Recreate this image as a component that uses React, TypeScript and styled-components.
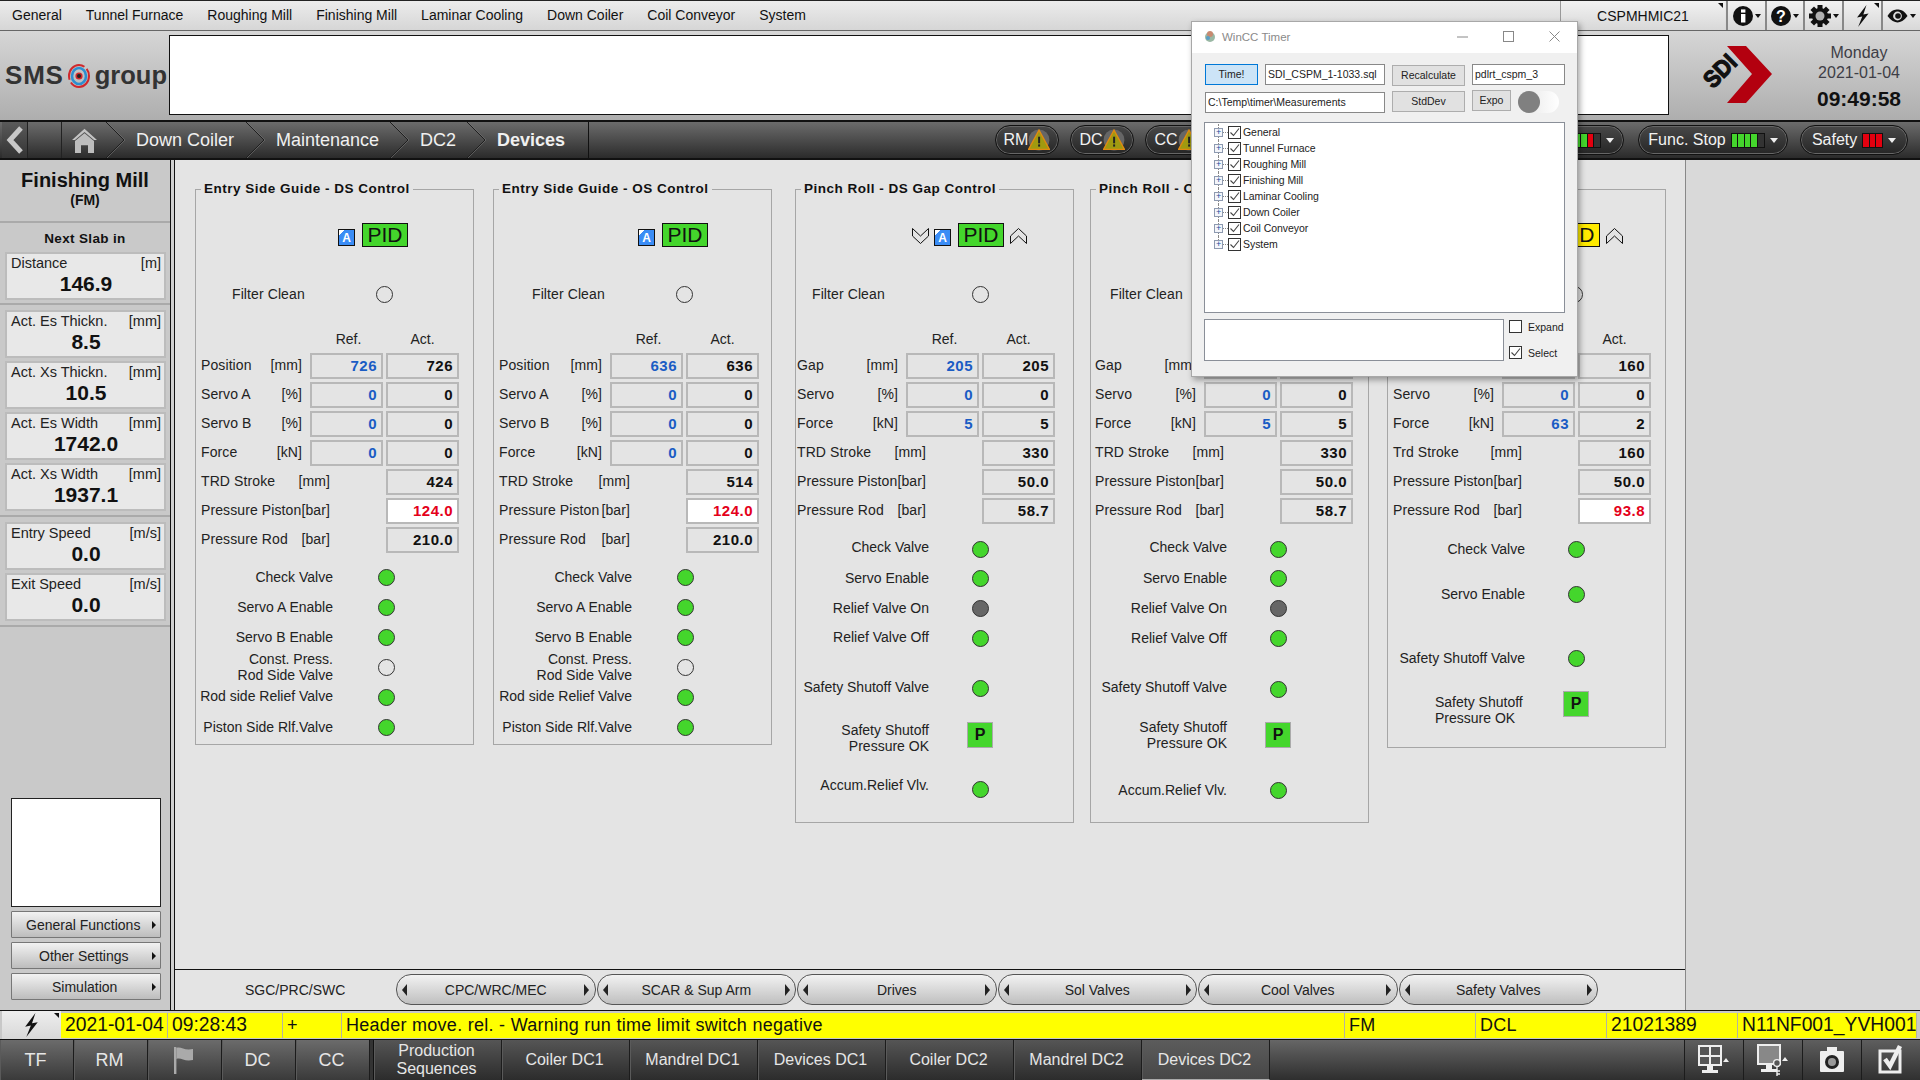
import React from 'react';
import styled, { createGlobalStyle } from 'styled-components';

const Global = createGlobalStyle`
  html, body { margin: 0; padding: 0; background: #e4e4e4; overflow: hidden; }
  * { box-sizing: border-box; }
  body { font-family: "Liberation Sans", Arial, sans-serif; color: #111; }
`;

const Root = styled.div`
  position: relative; width: 1920px; height: 1080px; overflow: hidden;
  display: flex; flex-direction: column;
`;

/* ---------- top menu ---------- */
const TopMenu = styled.div`
  height: 31px; flex: none; display: flex; align-items: stretch;
  border-top: 1px solid #222; border-bottom: 1px solid #666;
  background: linear-gradient(#ececec, #d6d6d6);
`;
const MenuList = styled.div`
  display: flex; align-items: center; gap: 24px; padding: 0 0 2px 12px; font-size: 14px; flex: 1;
`;
const HostCell = styled.div`
  position: relative; width: 165px; margin-right: 1px; display: flex; align-items: center; justify-content: center;
  font-size: 14px; background: linear-gradient(#f2f2f2, #d8d8d8);
  border-left: 1px solid #999;
`;
const CornerMark = styled.i`
  position: absolute; top: 2px; right: 2px; width: 0; height: 0;
  border-top: 5px solid #111; border-left: 5px solid transparent;
`;
const IconCell = styled.div<{ $w: number }>`
  position: relative; width: ${p => p.$w}px; display: flex; align-items: center; justify-content: center; gap: 2px;
  background: linear-gradient(#f2f2f2, #d8d8d8); border-left: 2px solid #888;
`;
const Caret = styled.i`
  width: 0; height: 0; border-top: 4px solid #111; border-left: 3px solid transparent; border-right: 3px solid transparent;
`;

/* ---------- header ---------- */
const Header = styled.div`
  height: 89px; flex: none; display: flex; align-items: flex-start;
  background: linear-gradient(#d6d6d6, #aeaeae);
`;
const LogoArea = styled.div`
  width: 169px; height: 89px; flex: none; padding-left: 5px; display: flex; align-items: center; gap: 5px;
  font-size: 25.5px; font-weight: 700; color: #333;
`;
const LogoSms = styled.span`
  font-size: 26px; letter-spacing: 0.8px; margin-right: -1px;
`;
const WhiteBox = styled.div`
  width: 1500px; height: 80px; margin-top: 4px; background: #fff; border: 1px solid #111; flex: none;
`;
const SdiMark = styled.svg`
  margin: 13px 0 0 30px; flex: none; overflow: visible;
`;
const DateBlock = styled.div`
  width: 110px; margin: 12px 0 0 29px; display: flex; flex-direction: column; align-items: center;
  font-size: 16px; color: #3e3e46; line-height: 20px;
`;
const TimeText = styled.div`
  margin-top: 4px; font-size: 21px; line-height: 24px; font-weight: 700; color: #111;
`;

/* ---------- breadcrumb bar ---------- */
const NavBar = styled.div`
  height: 40px; flex: none; display: flex; align-items: stretch;
  border-top: 2px solid #111; border-bottom: 2px solid #111;
  background: linear-gradient(#6c6c6c, #2b2b2b); color: #f0f0f0; font-size: 18px;
`;
const BackButton = styled.div`
  width: 26px; margin-left: 2px; display: flex; align-items: center; justify-content: center;
  background: linear-gradient(#5a5a5a, #333); border-right: 1px solid #222;
`;
const HomeCell = styled.div`
  margin-left: 33px; width: 45px; padding-left: 10px; display: flex; align-items: center;
  border-left: 1px solid #222;
`;
const CrumbSep = styled.svg`
  width: 20px; height: 36px; flex: none;
`;
const Crumb = styled.div<{ $w: number; $bold?: boolean }>`
  width: ${p => p.$w}px; display: flex; align-items: center; padding-left: 10px;
  font-weight: ${p => (p.$bold ? 700 : 400)};
`;
const NavEnd = styled.div`
  width: 20px; border-right: 1px solid #111;
`;
const PillGroup = styled.div<{ $ml: string }>`
  margin-left: ${p => p.$ml}; display: flex; align-items: center; gap: 11px;
`;
const Pill = styled.div<{ $w: number; $gap?: number; $ml?: number; $mr?: number; $end?: boolean }>`
  width: ${p => p.$w}px; height: 30px; border-radius: 15px; border: 1px solid #111;
  margin: 0 ${p => p.$mr ?? 0}px 0 ${p => p.$ml ?? 0}px;
  box-shadow: 0 0 0 1px #666 inset;
  background: linear-gradient(#484848, #262626);
  display: flex; align-items: center; justify-content: ${p => (p.$end ? 'flex-end' : 'center')}; gap: ${p => p.$gap ?? 5}px;
  padding-right: ${p => (p.$end ? 9 : 0)}px; font-size: 16px; color: #f2f2f2;
`;
const Led = styled.div`
  display: flex; gap: 1px; padding: 1px; background: #111; height: 15px;
`;
const LedSeg = styled.i<{ $c: string }>`
  width: 5.6px; height: 13px; background: ${p => p.$c};
`;
const WhiteCaret = styled.i`
  width: 0; height: 0; border-top: 5px solid #eee; border-left: 4px solid transparent; border-right: 4px solid transparent;
`;

/* ---------- main ---------- */
const Main = styled.div`
  height: 850px; flex: none; display: flex;
`;
const Sidebar = styled.div`
  width: 170px; flex: none; background: #c9c9c9; display: flex; flex-direction: column;
`;
const Rail = styled.div`
  width: 5px; flex: none; background: #d0d0d0; border-left: 1px solid #111; border-right: 1px solid #111;
`;
const Center = styled.div`
  width: 1510px; flex: none; display: flex; flex-direction: column; background: #e4e4e4;
`;
const RightCol = styled.div`
  flex: 1; background: #d9d9d9; border-left: 1px solid #888;
`;
const TitleBlock = styled.div`
  height: 63px; border-bottom: 2px solid #aaa; display: flex; flex-direction: column; align-items: center;
  padding-top: 9px; font-weight: 700; font-size: 20px; line-height: 22px;
`;
const TitleSub = styled.div`
  font-size: 14px; line-height: 18px;
`;
const NextSlab = styled.div`
  height: 29px; padding-top: 1px; display: flex; align-items: center; justify-content: center; font-weight: 700; font-size: 13.5px;
  letter-spacing: 0.35px;
`;
const Section = styled.div<{ $pt: number; $pb: number }>`
  padding: ${p => p.$pt}px 4px ${p => p.$pb}px 5px; border-bottom: 2px solid #aaa;
  display: flex; flex-direction: column; gap: 3px;
`;
const Card = styled.div`
  height: 48px; border: 2px solid #bcbcbc; background: #e8e8e8; padding: 0 3px 0 4px;
  display: flex; flex-direction: column;
`;
const CardTop = styled.div`
  display: flex; justify-content: space-between; font-size: 14.5px; line-height: 18px; color: #222;
`;
const CardValue = styled.div`
  text-align: center; font-size: 21px; font-weight: 700; line-height: 24px;
`;
const SideSpacer = styled.div`
  flex: 1;
`;
const SideWhite = styled.div`
  width: 150px; height: 109px; margin-left: 11px; background: #fff; border: 1px solid #222;
`;
const SideButton = styled.div<{ $pl: number }>`
  position: relative; width: 150px; height: 27px; margin: 4px 0 0 11px; padding-left: ${p => p.$pl}px;
  display: flex; align-items: center; font-size: 14px; color: #222;
  background: linear-gradient(#f2f2f2, #bdbdbd); border: 1px solid #777; border-radius: 1px;
  &::after {
    content: ""; position: absolute; right: 4px; top: 9px;
    border-left: 4px solid #111; border-top: 4px solid transparent; border-bottom: 4px solid transparent;
  }
`;
const SideBottomPad = styled.div`
  height: 10px; flex: none;
`;

/* ---------- panels ---------- */
const PanelArea = styled.div`
  height: 809px; flex: none; display: flex; align-items: flex-start; padding: 29px 0 0 20px;
`;
const Panel = styled.section<{ $ml: number; $h: number }>`
  position: relative; width: 279px; height: ${p => p.$h}px; margin-left: ${p => p.$ml}px; flex: none;
  border: 1px solid #a6a6a6;
`;
const Legend = styled.h3`
  position: absolute; top: -10px; left: 5px; margin: 0; padding: 0 3px; background: #e4e4e4;
  font-size: 13.5px; line-height: 17px; font-weight: 700; letter-spacing: 0.5px; white-space: nowrap;
`;
const ModeRow = styled.div<{ $pl: number }>`
  margin-top: 33px; height: 24px; padding-left: ${p => p.$pl}px; display: flex; align-items: center;
`;
const AutoIcon = styled.div`
  width: 17px; height: 17px; margin: 4px 7px 0 0; flex: none; border: 1px solid #111; color: #fff;
  background: linear-gradient(135deg, #fff 0 4px, #3a8cf5 4px);
  font-size: 12px; font-weight: 700; line-height: 16px; text-align: center;
`;
const PidBox = styled.div<{ $c: string }>`
  width: 46px; height: 24px; flex: none; background: ${p => p.$c}; border: 1px solid #111;
  font-size: 21px; line-height: 22px; text-align: center; color: #111;
`;
const ChevronSvg = styled.svg<{ $ml: number; $mr: number }>`
  width: 17px; height: 16px; flex: none; margin: 2px ${p => p.$mr}px 0 ${p => p.$ml}px;
`;
const FilterRow = styled.div<{ $pl: number; $dot: number }>`
  margin-top: 38px; height: 18px; display: grid; grid-template-columns: ${p => p.$dot}px 18px; align-items: center;
  padding-left: 0; font-size: 14px; letter-spacing: 0.1px; color: #222;
  & > span { padding-left: ${p => p.$pl}px; }
`;
const HeadRow = styled.div<{ $col: number }>`
  margin-top: 28px; height: 16px; display: grid; grid-template-columns: ${p => p.$col}px 73px 73px; column-gap: 3px;
  font-size: 14px; line-height: 16px; text-align: center; color: #222;
`;
const RefHead = styled.span`
  padding-left: 4px;
`;
const DataGrid = styled.div`
  margin-top: 6px; display: flex; flex-direction: column; gap: 3px;
`;
const DataRow = styled.div<{ $col: number }>`
  height: 26px; display: grid; grid-template-columns: ${p => p.$col}px 73px 73px; column-gap: 3px; align-items: center;
`;
const RowLabel = styled.div<{ $pl: number; $wide?: boolean }>`
  grid-column: ${p => (p.$wide ? '1 / span 2' : '1')};
  display: flex; justify-content: space-between; padding: 0 ${p => (p.$wide ? 53 : 5)}px 2px ${p => p.$pl}px;
  font-size: 14px; letter-spacing: 0.1px; color: #222; white-space: nowrap;
`;
const ValueBox = styled.div<{ $col: number; $tone?: 'blue' | 'alert' }>`
  grid-column: ${p => p.$col}; height: 26px; border: 2px solid #b8b8b8; padding-right: 4px; text-align: right;
  font-size: 15px; font-weight: 700; line-height: 22px; letter-spacing: 0.5px;
  background: ${p => (p.$tone === 'alert' ? '#fff' : 'transparent')};
  color: ${p => (p.$tone === 'blue' ? '#1a5cc4' : p.$tone === 'alert' ? '#e4001a' : '#111')};
`;
const StatusRow = styled.div<{ $gap: number; $label: number; $ml: number }>`
  height: 26px; margin-top: ${p => p.$gap}px; display: grid; align-items: center;
  grid-template-rows: 26px;
  grid-template-columns: ${p => p.$label}px 26px; column-gap: ${p => p.$ml}px;
`;
const StatusLabel = styled.div<{ $up?: number; $left?: number }>`
  text-align: ${p => (p.$left ? 'left' : 'right')}; padding-left: ${p => p.$left ?? 0}px;
  font-size: 14px; line-height: 16px; color: #222; white-space: pre-line;
  padding-bottom: ${p => Math.max(p.$up ?? 0, 0) * 2}px;
  padding-top: ${p => Math.max(-(p.$up ?? 0), 0) * 2}px;
`;
const Indicator = styled.div`
  display: flex; justify-content: center; align-items: center;
`;
const Dot = styled.i<{ $c: string }>`
  display: block; width: 17px; height: 17px; border-radius: 50%; border: 1px solid #333; background: ${p => p.$c};
`;
const PBox = styled.div`
  width: 26px; height: 26px; flex: none; background: #44d62c; border: 1px solid #aaa;
  font-size: 16px; font-weight: 700; line-height: 24px; text-align: center; color: #111;
`;

/* ---------- tab strip ---------- */
const TabStrip = styled.div`
  height: 41px; flex: none; display: flex; align-items: flex-start; padding-top: 4px; gap: 1px; border-top: 1px solid #111;
`;
const PlainTab = styled.div`
  width: 220px; height: 31px; padding-left: 70px; display: flex; align-items: center; font-size: 14px; color: #222;
`;
const RoundTab = styled.div`
  width: 199.5px; height: 31px; border-radius: 15px; border: 1px solid #555; padding: 0 5px;
  background: linear-gradient(#f2f2f2, #bfbfbf); display: flex; align-items: center; justify-content: space-between;
  font-size: 14px; color: #222;
`;
const ArrowLeft = styled.i`
  border-right: 5px solid #222; border-top: 6px solid transparent; border-bottom: 6px solid transparent;
`;
const ArrowRight = styled.i`
  border-left: 5px solid #222; border-top: 6px solid transparent; border-bottom: 6px solid transparent;
`;

/* ---------- alarm ---------- */
const AlarmBar = styled.div`
  height: 30px; flex: none; display: flex; padding-left: 2px; background: #c8c8c8;
  border-top: 1px solid #111; border-bottom: 1px solid #111;
`;
const BoltButton = styled.div`
  position: relative; width: 59px; display: flex; align-items: center; justify-content: center;
  background: linear-gradient(#eee, #d8d8d8);
`;
const AlarmGrid = styled.div`
  margin: 2px 0; height: 25px; display: grid; width: 1856px; background: #ffff00; line-height: 24px;
  grid-template-columns: 107px 115px 59px 1003px 131px 131px 131px 179px;
`;
const AlarmCell = styled.div<{ $num?: boolean }>`
  padding-left: 4px; border-right: 1px solid #b4b4a0; overflow: hidden; white-space: nowrap; color: #111;
  font-size: ${p => (p.$num ? 19.3 : 18)}px; letter-spacing: ${p => (p.$num ? 0 : 0.28)}px;
`;

/* ---------- bottom ---------- */
const BottomBar = styled.div`
  height: 40px; flex: none; display: flex; background: linear-gradient(#666, #2e2e2e); color: #e6e6e6;
`;
const Tab = styled.div<{ $w: number; $active?: boolean; $big?: boolean }>`
  width: ${p => p.$w}px; height: 40px; padding-right: 2px; display: flex; align-items: center; justify-content: center; text-align: center;
  font-size: ${p => (p.$big ? 18 : 16)}px; line-height: 18px; border-right: 1px solid #1c1c1c;
  box-shadow: inset 1px 0 0 #5a5a5a;
  background: ${p => (p.$active ? 'linear-gradient(#5c5c5c, #474747)' : p.$big ? 'linear-gradient(#6b6b6b, #3a3a3a)' : 'linear-gradient(#555, #2c2c2c)')};
  border-bottom: ${p => (p.$active ? '1px solid #aaa' : 'none')};
`;
const TabGap = styled.div`
  width: 4px; background: #333; border-right: 1px solid #111;
`;
const ToolGroup = styled.div`
  margin-left: auto; display: flex;
`;
const ToolCell = styled.div`
  width: 59px; height: 40px; display: flex; align-items: center; justify-content: center;
  border-left: 1px solid #1c1c1c; background: linear-gradient(#5e5e5e, #303030);
`;

/* ---------- floating window ---------- */
const Win = styled.div`
  position: absolute; left: 1191px; top: 21px; width: 387px; height: 356px;
  background: #f0f0f0; border: 1px solid #a8a8a8; box-shadow: 2px 3px 6px rgba(0,0,0,.35);
  display: flex; flex-direction: column; font-size: 11px; color: #222;
`;
const WinTitle = styled.div`
  height: 31px; flex: none; background: #fff; display: flex; align-items: center; padding: 0 0 2px 12px; gap: 6px;
  color: #8a8a8a; font-size: 11.5px;
`;
const WinControls = styled.div`
  margin-left: auto; display: flex; align-items: center; gap: 35px; padding-right: 17px; color: #999;
`;
const WinBody = styled.div`
  padding: 11px 0 0 13px;
`;
const WinRow = styled.div<{ $mt?: number }>`
  display: flex; align-items: flex-start; gap: 7px; height: 22px; margin-top: ${p => p.$mt ?? 0}px;
`;
const WinInput = styled.div<{ $w: number; $mt?: number }>`
  width: ${p => p.$w}px; height: 21px; flex: none; margin-top: ${p => p.$mt ?? 0}px; background: #fff; border: 1px solid #888; padding-left: 2px;
  font-size: 10.5px; line-height: 18px; white-space: nowrap; overflow: hidden;
`;
const WinBtn = styled.div<{ $w: number; $mt?: number; $primary?: boolean }>`
  width: ${p => p.$w}px; height: 21px; flex: none; margin-top: ${p => p.$mt ?? 0}px; text-align: center;
  font-size: 10.5px; line-height: 19px;
  background: ${p => (p.$primary ? '#cce4f7' : '#e1e1e1')}; border: 1px solid ${p => (p.$primary ? '#0078d7' : '#adadad')};
`;
const Toggle = styled.div`
  width: 41px; height: 22px; border-radius: 11px; background: linear-gradient(90deg, #e4e4e4, #fff); margin-top: 1px;
  &::before { content: ""; display: block; width: 22px; height: 22px; border-radius: 50%; background: #808080; }
`;
const Tree = styled.div`
  width: 361px; height: 191px; margin: 10px 0 0 -1px; padding-top: 1px; background: #fff; border: 1px solid #8a8f98;
`;
const TreeRow = styled.div`
  position: relative; height: 16px; display: flex; align-items: center; padding-left: 9px; font-size: 10.5px; letter-spacing: -0.05px;
  &::before { content: ""; position: absolute; left: 13px; top: 0; bottom: 0; border-left: 1px dotted #888; }
  &:last-child::before { bottom: 8px; }
`;
const PlusBox = styled.i`
  position: relative; z-index: 1; width: 9px; height: 9px; flex: none; background: #f4f6fa; border: 1px solid #8e9ab0;
  font-style: normal; color: #234a9c; font-size: 9px; line-height: 7px; text-align: center;
`;
const TreeDots = styled.i`
  width: 5px; border-top: 1px dotted #888; flex: none;
`;
const Box13 = styled.span`
  width: 13px; height: 13px; flex: none; background: #fff; border: 1px solid #333; display: flex;
`;
const TreeLabel = styled.span`
  margin-left: 2px;
`;
const WinBottom = styled.div`
  margin: 6px 0 0 -1px; display: flex;
`;
const WinText = styled.div`
  width: 300px; height: 42px; background: #fff; border: 1px solid #8a8f98;
`;
const WinChecks = styled.div`
  margin-left: 5px; display: flex; flex-direction: column; gap: 13px; padding-top: 1px;
`;
const WinCheck = styled.label`
  display: flex; align-items: center; gap: 6px; height: 13px; font-size: 10.5px;
`;

/* ---------- drawings ---------- */
const Tick = () => (
  <svg width="11" height="11" viewBox="0 0 11 11"><path d="M1.5 5.5 L4.5 8.5 L10 1.5" fill="none" stroke="#444" strokeWidth="1.1" /></svg>
);
const ChevUp = ({ ml, mr }: { ml: number; mr: number }) => (
  <ChevronSvg viewBox="0 0 17 16" $ml={ml} $mr={mr}><polygon points="8.5,0.5 16.5,8 16.5,15.5 8.5,8 0.5,15.5 0.5,8" fill="none" stroke="#111" /></ChevronSvg>
);
const ChevDown = ({ ml, mr }: { ml: number; mr: number }) => (
  <ChevronSvg viewBox="0 0 17 16" $ml={ml} $mr={mr}><polygon points="8.5,15.5 16.5,8 16.5,0.5 8.5,8 0.5,0.5 0.5,8" fill="none" stroke="#111" /></ChevronSvg>
);
const Sep = () => (
  <CrumbSep viewBox="0 0 20 36"><polyline points="0,0 18,18 0,36" fill="none" stroke="#1e1e1e" strokeWidth="1" /><polyline points="1,0 19,18 1,36" fill="none" stroke="#777" strokeWidth="0.6" /></CrumbSep>
);
const Warn = () => (
  <svg width="22" height="22" viewBox="0 0 20 20">
    <circle cx="10" cy="10" r="9.5" fill="#666" />
    <polygon points="10,1 19.5,18.5 0.5,18.5" fill="#a09a10" stroke="#e08a10" strokeWidth="1.2" />
    <rect x="9.2" y="7" width="1.8" height="6" fill="#222" /><rect x="9.2" y="14" width="1.8" height="2" fill="#222" />
  </svg>
);
const Bolt = ({ size }: { size: number }) => (
  <svg width={size * 0.62} height={size} viewBox="0 0 13 21"><polygon points="10,0 1,12 6,11 2,21 12,8 7,9" fill="#111" /></svg>
);
const Swirl = () => (
  <svg width="22" height="24" viewBox="0 0 22 24">
    <ellipse cx="11" cy="12" rx="10" ry="11" fill="none" stroke="#d0282c" strokeWidth="2" strokeDasharray="26 3" />
    <ellipse cx="11" cy="12" rx="7" ry="8" fill="none" stroke="#2d8fd0" strokeWidth="2.6" />
    <circle cx="11" cy="12" r="3.6" fill="#d0282c" /><circle cx="11" cy="12" r="2" fill="#222" />
  </svg>
);
const Gear = () => (
  <svg width="22" height="22" viewBox="0 0 22 22">
    {[0, 45, 90, 135].map(a => <rect key={a} x="8.5" y="0" width="5" height="22" fill="#111" transform={`rotate(${a} 11 11)`} />)}
    <circle cx="11" cy="11" r="8" fill="#111" /><circle cx="11" cy="11" r="4.5" fill="#b0b0b0" />
  </svg>
);

/* ---------- data ---------- */
type DataItem = { name: string; unit: string; ref?: string; act: string; alert?: boolean };
type StatusItem = { label: string; gap: number; kind: 'on' | 'off' | 'idle' | 'p'; up?: number; left?: number };
type PanelCfg = {
  title: string; ml: number; h: number; labelPl: number; col: number; pidPl: number; arrows: boolean; pid: string;
  filterPl: number; filterDot: number; statusW: number; statusMl: number; rows: DataItem[]; status: StatusItem[];
};

const guideStatus = (): StatusItem[] => [
  { label: 'Check Valve', gap: 11, kind: 'on' },
  { label: 'Servo A Enable', gap: 4, kind: 'on' },
  { label: 'Servo B Enable', gap: 4, kind: 'on' },
  { label: 'Const. Press.\nRod Side Valve', gap: 4, kind: 'off' },
  { label: 'Rod side Relief Valve', gap: 4, kind: 'on', up: 1 },
  { label: 'Piston Side Rlf.Valve', gap: 4, kind: 'on' },
];
const guideRows = (pos: string, trd: string): DataItem[] => [
  { name: 'Position', unit: '[mm]', ref: pos, act: pos },
  { name: 'Servo A', unit: '[%]', ref: '0', act: '0' },
  { name: 'Servo B', unit: '[%]', ref: '0', act: '0' },
  { name: 'Force', unit: '[kN]', ref: '0', act: '0' },
  { name: 'TRD Stroke', unit: '[mm]', act: trd },
  { name: 'Pressure Piston', unit: '[bar]', act: '124.0', alert: true },
  { name: 'Pressure Rod', unit: '[bar]', act: '210.0' },
];
const pinchRows: DataItem[] = [
  { name: 'Gap', unit: '[mm]', ref: '205', act: '205' },
  { name: 'Servo', unit: '[%]', ref: '0', act: '0' },
  { name: 'Force', unit: '[kN]', ref: '5', act: '5' },
  { name: 'TRD Stroke', unit: '[mm]', act: '330' },
  { name: 'Pressure Piston', unit: '[bar]', act: '50.0' },
  { name: 'Pressure Rod', unit: '[bar]', act: '58.7' },
];

const panels: PanelCfg[] = [
  { title: 'Entry Side Guide - DS Control', ml: 0, h: 556, labelPl: 5, col: 111, pidPl: 142, arrows: false, pid: '#44d62c', filterPl: 36, filterDot: 180, statusW: 137, statusMl: 40, rows: guideRows('726', '424'), status: guideStatus() },
  { title: 'Entry Side Guide - OS Control', ml: 19, h: 556, labelPl: 5, col: 113, pidPl: 144, arrows: false, pid: '#44d62c', filterPl: 38, filterDot: 182, statusW: 138, statusMl: 40, rows: guideRows('636', '514'), status: guideStatus() },
  { title: 'Pinch Roll - DS Gap Control', ml: 23, h: 634, labelPl: 1, col: 107, pidPl: 116, arrows: true, pid: '#44d62c', filterPl: 16, filterDot: 176, statusW: 133, statusMl: 38, rows: pinchRows,
    status: [
      { label: 'Check Valve', gap: 12, kind: 'on', up: 2 },
      { label: 'Servo Enable', gap: 3, kind: 'on' },
      { label: 'Relief Valve On', gap: 4, kind: 'idle' },
      { label: 'Relief Valve Off', gap: 4, kind: 'on', up: 1 },
      { label: 'Safety Shutoff Valve', gap: 24, kind: 'on', up: 1 },
      { label: 'Safety Shutoff\nPressure OK', gap: 21, kind: 'p', up: -3 },
      { label: 'Accum.Relief Vlv.', gap: 28, kind: 'on', up: 4 },
    ] },
  { title: 'Pinch Roll - OS Gap Control', ml: 16, h: 634, labelPl: 4, col: 110, pidPl: 120, arrows: true, pid: '#44d62c', filterPl: 19, filterDot: 179, statusW: 136, statusMl: 38, rows: pinchRows,
    status: [
      { label: 'Check Valve', gap: 12, kind: 'on', up: 2 },
      { label: 'Servo Enable', gap: 3, kind: 'on' },
      { label: 'Relief Valve On', gap: 4, kind: 'idle' },
      { label: 'Relief Valve Off', gap: 4, kind: 'on' },
      { label: 'Safety Shutoff Valve', gap: 25, kind: 'on', up: 2 },
      { label: 'Safety Shutoff\nPressure OK', gap: 20, kind: 'p' },
      { label: 'Accum.Relief Vlv.', gap: 29, kind: 'on' },
    ] },
  { title: 'Pinch Roll - Gap Control', ml: 18, h: 559, labelPl: 5, col: 111, pidPl: 120, arrows: true, pid: '#ffea00', filterPl: 19, filterDot: 178, statusW: 137, statusMl: 38,
    rows: [
      { name: 'Gap', unit: '[mm]', ref: '160', act: '160' },
      { name: 'Servo', unit: '[%]', ref: '0', act: '0' },
      { name: 'Force', unit: '[kN]', ref: '63', act: '2' },
      { name: 'Trd Stroke', unit: '[mm]', act: '160' },
      { name: 'Pressure Piston', unit: '[bar]', act: '50.0' },
      { name: 'Pressure Rod', unit: '[bar]', act: '93.8', alert: true },
    ],
    status: [
      { label: 'Check Valve', gap: 12, kind: 'on' },
      { label: 'Servo Enable', gap: 19, kind: 'on' },
      { label: 'Safety Shutoff Valve', gap: 38, kind: 'on' },
      { label: 'Safety Shutoff\nPressure OK', gap: 20, kind: 'p', up: -6, left: 47 },
    ] },
];

const sideCards1 = [
  ['Act. Es Thickn.', '[mm]', '8.5'],
  ['Act. Xs Thickn.', '[mm]', '10.5'],
  ['Act. Es Width', '[mm]', '1742.0'],
  ['Act. Xs Width', '[mm]', '1937.1'],
];
const sideCards2 = [
  ['Entry Speed', '[m/s]', '0.0'],
  ['Exit Speed', '[m/s]', '0.0'],
];
const treeItems = ['General', 'Tunnel Furnace', 'Roughing Mill', 'Finishing Mill', 'Laminar Cooling', 'Down Coiler', 'Coil Conveyor', 'System'];
const menuItems = ['General', 'Tunnel Furnace', 'Roughing Mill', 'Finishing Mill', 'Laminar Cooling', 'Down Coiler', 'Coil Conveyor', 'System'];
const roundTabs = ['CPC/WRC/MEC', 'SCAR & Sup Arm', 'Drives', 'Sol Valves', 'Cool Valves', 'Safety Valves'];
const alarmCells: [string, boolean][] = [
  ['2021-01-04', true], ['09:28:43', true], ['+', false],
  ['Header move. rel. - Warning run time limit switch negative', false],
  ['FM', false], ['DCL', false], ['21021389', true], ['N11NF001_YVH001', true],
];

const SideCard = ({ c }: { c: string[] }) => (
  <Card>
    <CardTop><span>{c[0]}</span><span>{c[1]}</span></CardTop>
    <CardValue>{c[2]}</CardValue>
  </Card>
);

const PanelView = ({ p }: { p: PanelCfg }) => {
  const dotColor = (k: string) => (k === 'on' ? '#44d62c' : k === 'idle' ? '#666' : 'transparent');
  return (
    <Panel $ml={p.ml} $h={p.h}>
      <Legend>{p.title}</Legend>
      <ModeRow $pl={p.pidPl}>
        {p.arrows && <ChevDown ml={0} mr={5} />}
        <AutoIcon>A</AutoIcon>
        <PidBox $c={p.pid}>PID</PidBox>
        {p.arrows && <ChevUp ml={6} mr={0} />}
      </ModeRow>
      <FilterRow $pl={p.filterPl} $dot={p.filterDot}>
        <span>Filter Clean</span>
        <Dot $c="transparent" />
      </FilterRow>
      <HeadRow $col={p.col}><span /><RefHead>Ref.</RefHead><span>Act.</span></HeadRow>
      <DataGrid>
        {p.rows.map(r => (
          <DataRow key={r.name} $col={p.col}>
            <RowLabel $pl={p.labelPl} $wide={!r.ref}><span>{r.name}</span><span>{r.unit}</span></RowLabel>
            {r.ref && <ValueBox $col={2} $tone="blue">{r.ref}</ValueBox>}
            <ValueBox $col={3} $tone={r.alert ? 'alert' : undefined}>{r.act}</ValueBox>
          </DataRow>
        ))}
      </DataGrid>
      {p.status.map(s => (
        <StatusRow key={s.label} $gap={s.gap} $label={p.statusW} $ml={p.statusMl}>
          <StatusLabel $up={s.up} $left={s.left}>{s.label}</StatusLabel>
          <Indicator>{s.kind === 'p' ? <PBox>P</PBox> : <Dot $c={dotColor(s.kind)} />}</Indicator>
        </StatusRow>
      ))}
    </Panel>
  );
};

export default function App() {
  return (
    <Root>
      <Global />
      <TopMenu>
        <MenuList>{menuItems.map(m => <span key={m}>{m}</span>)}</MenuList>
        <HostCell>CSPMHMIC21<CornerMark /></HostCell>
        <IconCell $w={39}>
          <svg width="20" height="20" viewBox="0 0 20 20"><circle cx="10" cy="10" r="10" fill="#111" /><rect x="8" y="8" width="4.4" height="8.5" fill="#fff" /><rect x="8" y="3.4" width="4.4" height="3.2" fill="#fff" /></svg>
          <Caret />
        </IconCell>
        <IconCell $w={38}>
          <svg width="20" height="20" viewBox="0 0 20 20"><circle cx="10" cy="10" r="10" fill="#111" /><text x="10" y="16" textAnchor="middle" fontSize="16" fontWeight="700" fill="#fff" fontFamily="Liberation Sans">?</text></svg>
          <Caret />
        </IconCell>
        <IconCell $w={39}><Gear /><Caret /></IconCell>
        <IconCell $w={39}><Bolt size={22} /><CornerMark /></IconCell>
        <IconCell $w={39}>
          <svg width="21" height="14" viewBox="0 0 21 14"><path d="M0.5 7 C4 1 8 0.5 10.5 0.5 C13 0.5 17 1 20.5 7 C17 11.5 13.5 13.5 10.5 13.5 C7.5 13.5 4 11.5 0.5 7Z" fill="#111" /><circle cx="10.5" cy="7" r="4.4" fill="#ddd" /><circle cx="11" cy="7" r="2.8" fill="#111" /></svg>
          <Caret />
        </IconCell>
      </TopMenu>

      <Header>
        <LogoArea><LogoSms>SMS</LogoSms><Swirl /><span>group</span></LogoArea>
        <WhiteBox />
        <SdiMark width="76" height="62" viewBox="0 0 76 62">
          <polygon points="28,2 47,2 73,30 47,59 28,59 53,30" fill="#b3000f" />
          <text x="21" y="35" textAnchor="middle" fontSize="24" fontWeight="700" fill="#111" stroke="#111" strokeWidth="1.2" fontFamily="Liberation Sans" transform="rotate(-45 21 27)" textLength="36" lengthAdjust="spacingAndGlyphs">SDI</text>
        </SdiMark>
        <DateBlock><span>Monday</span><span>2021-01-04</span><TimeText>09:49:58</TimeText></DateBlock>
      </Header>

      <NavBar>
        <BackButton>
          <svg width="18" height="28" viewBox="0 0 18 28"><polyline points="15,2 4,14 15,26" fill="none" stroke="#c8c8c8" strokeWidth="5" /></svg>
        </BackButton>
        <HomeCell>
          <svg width="25" height="25" viewBox="0 0 25 29" preserveAspectRatio="none">
            <polygon points="12.5,1 25,14 22,14 12.5,4.5 3,14 0,14" fill="#c4c4c4" />
            <path d="M3 15 L12.5 6 L22 15 V29 H16 V20 H9 V29 H3 Z" fill="#bdbdbd" />
          </svg>
        </HomeCell>
        <Sep />
        <Crumb $w={120}>Down Coiler</Crumb>
        <Sep />
        <Crumb $w={124}>Maintenance</Crumb>
        <Sep />
        <Crumb $w={57}>DC2</Crumb>
        <Sep />
        <Crumb $w={82} $bold>Devices</Crumb>
        <NavEnd />
        <PillGroup $ml="406px">
          <Pill $w={64} $gap={0}>RM<Warn /></Pill>
          <Pill $w={64} $gap={0}>DC<Warn /></Pill>
          <Pill $w={64} $gap={0}>CC<Warn /></Pill>
        </PillGroup>
        <PillGroup $ml="auto">
          <Pill $w={94} $end>
            <Led>
              <LedSeg $c="#44d62c" /><LedSeg $c="#44d62c" /><LedSeg $c="#e4000f" /><LedSeg $c="#333" />
            </Led>
            <WhiteCaret />
          </Pill>
          <Pill $w={150} $ml={3} $mr={1}>
            Func. Stop
            <Led>
              <LedSeg $c="#44d62c" /><LedSeg $c="#44d62c" /><LedSeg $c="#44d62c" /><LedSeg $c="#44d62c" /><LedSeg $c="#333" />
            </Led>
            <WhiteCaret />
          </Pill>
          <Pill $w={108} $mr={12}>
            Safety
            <Led>
              <LedSeg $c="#e4000f" /><LedSeg $c="#e4000f" /><LedSeg $c="#e4000f" />
            </Led>
            <WhiteCaret />
          </Pill>
        </PillGroup>
      </NavBar>

      <Main>
        <Sidebar>
          <TitleBlock>Finishing Mill<TitleSub>(FM)</TitleSub></TitleBlock>
          <NextSlab>Next Slab in</NextSlab>
          <Section $pt={0} $pb={3}><SideCard c={['Distance', '[m]', '146.9']} /></Section>
          <Section $pt={5} $pb={4}>{sideCards1.map(c => <SideCard key={c[0]} c={c} />)}</Section>
          <Section $pt={5} $pb={4}>{sideCards2.map(c => <SideCard key={c[0]} c={c} />)}</Section>
          <SideSpacer />
          <SideWhite />
          <SideButton $pl={14}>General Functions</SideButton>
          <SideButton $pl={27}>Other Settings</SideButton>
          <SideButton $pl={40}>Simulation</SideButton>
          <SideBottomPad />
        </Sidebar>
        <Rail />
        <Center>
          <PanelArea>{panels.map(p => <PanelView key={p.title} p={p} />)}</PanelArea>
          <TabStrip>
            <PlainTab>SGC/PRC/SWC</PlainTab>
            {roundTabs.map(t => <RoundTab key={t}><ArrowLeft /><span>{t}</span><ArrowRight /></RoundTab>)}
          </TabStrip>
        </Center>
        <RightCol />
      </Main>

      <AlarmBar>
        <BoltButton><Bolt size={24} /><CornerMark /></BoltButton>
        <AlarmGrid>{alarmCells.map(([c, num]) => <AlarmCell key={c} $num={num}>{c}</AlarmCell>)}</AlarmGrid>
      </AlarmBar>

      <BottomBar>
        <Tab $w={74} $big>TF</Tab>
        <Tab $w={74} $big>RM</Tab>
        <Tab $w={74} $big>
          <svg width="22" height="28" viewBox="0 0 22 28"><rect x="1" y="1" width="2.4" height="27" fill="#aaa" /><path d="M3.4 2 C8 0 11 5 20 3 V14 C11 16 8 11 3.4 13 Z" fill="#aaa" /></svg>
        </Tab>
        <Tab $w={74} $big>DC</Tab>
        <Tab $w={74} $big>CC</Tab>
        <TabGap />
        <Tab $w={128}>Production<br />Sequences</Tab>
        <Tab $w={128}>Coiler DC1</Tab>
        <Tab $w={128}>Mandrel DC1</Tab>
        <Tab $w={128}>Devices DC1</Tab>
        <Tab $w={128}>Coiler DC2</Tab>
        <Tab $w={128}>Mandrel DC2</Tab>
        <Tab $w={128} $active>Devices DC2</Tab>
        <ToolGroup>
          <ToolCell>
            <svg width="34" height="32" viewBox="0 0 34 32"><rect x="1" y="1" width="24" height="21" fill="#eee" /><g fill="#555"><rect x="3" y="3" width="9" height="8" /><rect x="14" y="3" width="9" height="8" /><rect x="3" y="13" width="9" height="7" /><rect x="14" y="13" width="9" height="7" /></g><rect x="10" y="22" width="6" height="4" fill="#eee" /><rect x="5" y="26" width="16" height="3" fill="#eee" /><polygon points="29,14 32,18 26,18" fill="#eee" /></svg>
          </ToolCell>
          <ToolCell>
            <svg width="34" height="34" viewBox="0 0 34 34"><rect x="1" y="1" width="24" height="21" fill="#eee" /><rect x="3" y="3" width="20" height="17" fill="#888" /><rect x="10" y="22" width="6" height="4" fill="#eee" /><rect x="5" y="26" width="16" height="3" fill="#eee" /><circle cx="21" cy="20" r="3.4" fill="#555" stroke="#eee" strokeWidth="1.4" /><path d="M21 23 V33 M21 28 H24 M21 31 H24" stroke="#eee" strokeWidth="1.4" /><polygon points="29,14 32,18 26,18" fill="#eee" /></svg>
          </ToolCell>
          <ToolCell>
            <svg width="26" height="30" viewBox="0 0 26 30"><rect x="8" y="2" width="10" height="5" fill="#eee" /><rect x="1" y="6" width="24" height="21" rx="1" fill="#eee" /><circle cx="13" cy="17" r="7" fill="#222" /><circle cx="13" cy="17" r="4" fill="#999" /></svg>
          </ToolCell>
          <ToolCell>
            <svg width="26" height="32" viewBox="0 0 26 32"><rect x="2" y="7" width="20" height="21" fill="none" stroke="#eee" strokeWidth="3" /><polyline points="7,15 12,22 22,2" fill="none" stroke="#eee" strokeWidth="4.5" /></svg>
          </ToolCell>
        </ToolGroup>
      </BottomBar>

      <Win>
        <WinTitle>
          <svg width="12" height="13" viewBox="0 0 12 13"><circle cx="6" cy="7" r="5" fill="#9ab8a4" /><circle cx="6" cy="4" r="3" fill="#c88a70" /><circle cx="4" cy="8" r="2" fill="#5a9ec4" /></svg>
          WinCC Timer
          <WinControls>
            <svg width="11" height="11" viewBox="0 0 11 11"><path d="M0 6 H11" stroke="#888" /></svg>
            <svg width="11" height="11" viewBox="0 0 11 11"><rect x="0.5" y="0.5" width="10" height="10" fill="none" stroke="#888" /></svg>
            <svg width="11" height="11" viewBox="0 0 11 11"><path d="M0.5 0.5 L10.5 10.5 M10.5 0.5 L0.5 10.5" stroke="#888" /></svg>
          </WinControls>
        </WinTitle>
        <WinBody>
          <WinRow>
            <WinBtn $w={53} $primary>Time!</WinBtn>
            <WinInput $w={120}>SDI_CSPM_1-1033.sql</WinInput>
            <WinBtn $w={73} $mt={1}>Recalculate</WinBtn>
            <WinInput $w={93}>pdlrt_cspm_3</WinInput>
          </WinRow>
          <WinRow $mt={4}>
            <WinInput $w={180} $mt={2}>C:\Temp\timer\Measurements</WinInput>
            <WinBtn $w={73} $mt={1}>StdDev</WinBtn>
            <WinBtn $w={39}>Expo</WinBtn>
            <Toggle />
          </WinRow>
          <Tree>
            {treeItems.map(t => (
              <TreeRow key={t}>
                <PlusBox>+</PlusBox><TreeDots /><Box13><Tick /></Box13><TreeLabel>{t}</TreeLabel>
              </TreeRow>
            ))}
          </Tree>
          <WinBottom>
            <WinText />
            <WinChecks>
              <WinCheck><Box13 />Expand</WinCheck>
              <WinCheck><Box13><Tick /></Box13>Select</WinCheck>
            </WinChecks>
          </WinBottom>
        </WinBody>
      </Win>
    </Root>
  );
}
